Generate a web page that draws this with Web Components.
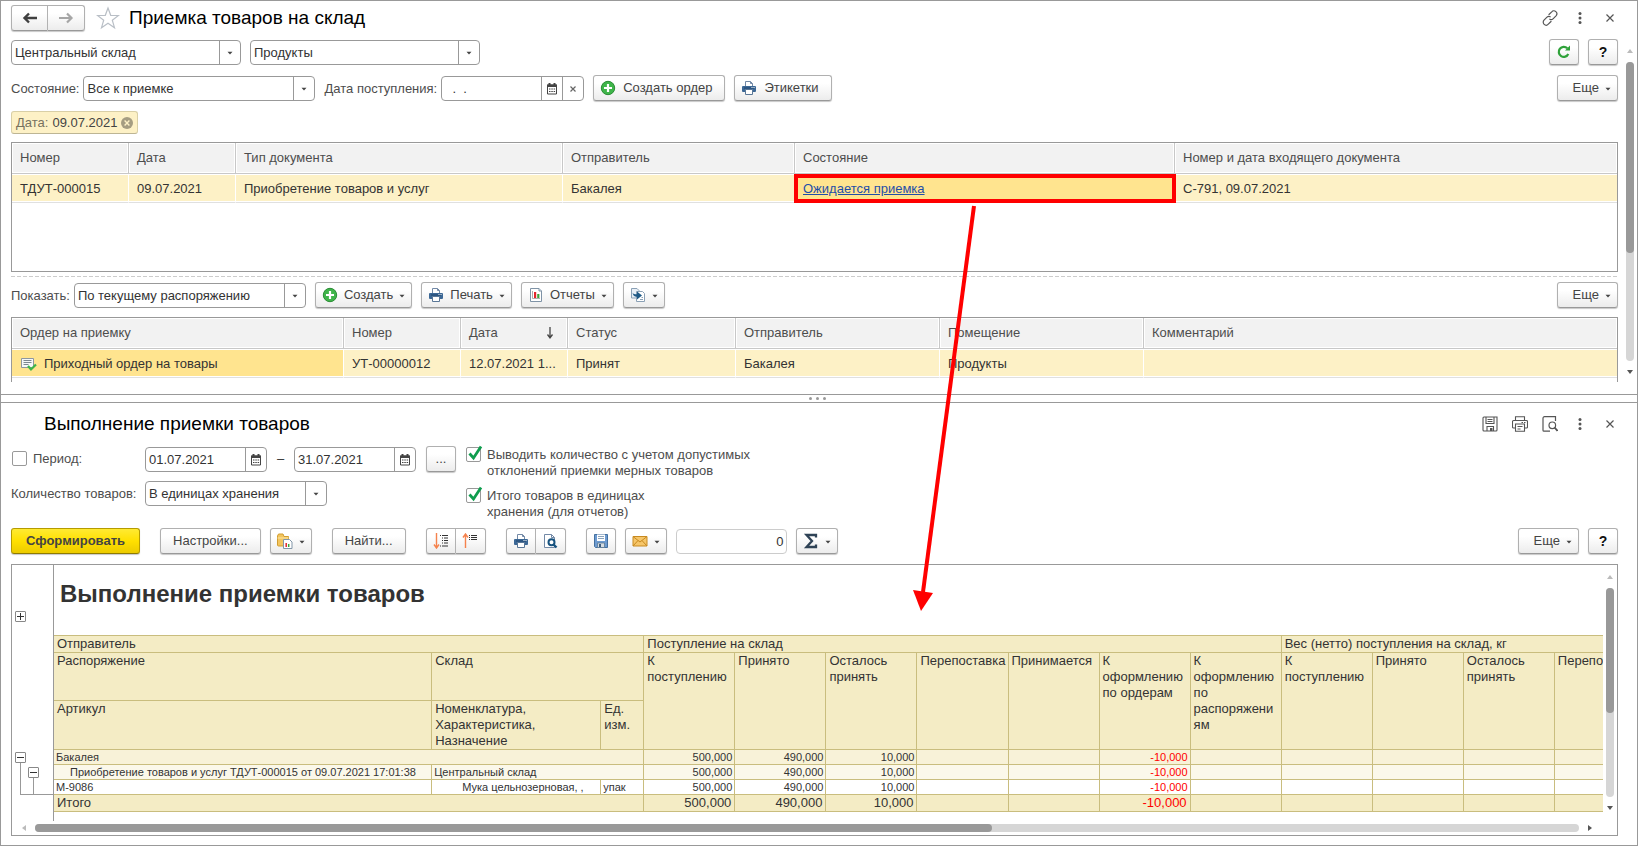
<!DOCTYPE html>
<html lang="ru">
<head>
<meta charset="utf-8">
<title>Приемка товаров на склад</title>
<style>
  body { margin: 0; background: #fff; color: #333; font: 13px/16px "Liberation Sans", Arial, sans-serif; }
</style>
</head>
<body>
<wh-app></wh-app>

<script>
const ICONS = {
  back: ['0 0 16 16', '<path d="M15 8H3M7 3.5 2.5 8 7 12.5" fill="none" stroke="#404040" stroke-width="2.4"/>'],
  forward: ['0 0 16 16', '<path d="M1 8h12M9 3.5 13.5 8 9 12.500" fill="none" stroke="#a6a6a6" stroke-width="2.2"/>'],
  star: ['0 0 24 24', '<path d="M12 2l2.700 7.300 7.800.2-6.200 4.700 2.200 7.500L12 17.300l-6.500 4.400 2.200-7.500L1.500 9.500l7.800-.2z" fill="#fff" stroke="#b9bfc6" stroke-width="1.200"/>'],
  link: ['0 0 16 16', '<g fill="none" stroke="#555" stroke-width="1.200" stroke-linecap="round"><path d="M7 4.500 9.700 1.800a2.800 2.800 0 0 1 4.300 4L11 8.800a2.700 2.700 0 0 1-3.200.4"/><path d="M9 11.500 6.300 14.200a2.800 2.800 0 0 1-4.300-4L5 7.200a2.700 2.700 0 0 1 3.200-.4"/></g>'],
  dots: ['0 0 16 16', '<g fill="#555"><circle cx="8" cy="3.500" r="1.500"/><circle cx="8" cy="8" r="1.500"/><circle cx="8" cy="12.500" r="1.500"/></g>'],
  close: ['0 0 16 16', '<path d="M4.500 4.500l7 7m0-7-7 7" stroke="#555" stroke-width="1.200"/>'],
  clear: ['0 0 16 16', '<path d="M5.500 5.500l5 5m0-5-5 5" stroke="#666" stroke-width="1.200"/>'],
  down: ['0 0 6 4', '<path d="M.5 .8h5L3 3.500z" fill="#444"/>'],
  calendar: ['0 0 16 16', '<path d="M3.500 4h9v9h-9z" fill="#fff" stroke="#444"/><path d="M3 3.500h10V6H3zM4.500 2h2v2h-2zM9.500 2h2v2h-2z" fill="#444"/><path d="M5 8h1.500M7.300 8h1.500M9.600 8h1.500M5 10.500h1.500M7.300 10.500h1.500M9.600 10.500h1.500" stroke="#444" stroke-width="1.200"/>'],
  plus: ['0 0 16 16', '<circle cx="8" cy="8" r="6.700" fill="#3fb54a" stroke="#2b8c35"/><path d="M8 4v8M4 8h8" stroke="#fff" stroke-width="2.200"/>'],
  printer: ['0 0 16 16', '<path d="M4.500 6V1.500h5l2 2V6" fill="#fff" stroke="#7289a6"/><path d="M9.500 1.500v2h2" fill="none" stroke="#7289a6"/><rect x="1" y="6" width="14" height="6" rx="1" fill="#3c6896"/><path d="M3 8h10" stroke="#1f456e"/><path d="M10.500 7.500h1M12.500 7.500h1" stroke="#fff"/><path d="M4.500 9.500h7v5h-7z" fill="#fff" stroke="#5a7797"/>'],
  report: ['0 0 16 16', '<path d="M2.500 1.500h8.500l2.500 2.500v10.500h-11z" fill="#fff" stroke="#7f93a6"/><path d="M11 1.500V4h2.500" fill="#dde5ec" stroke="#7f93a6"/><path d="M4.500 4v7.500h7.500" fill="none" stroke="#999" stroke-width=".8"/><path d="M6 5h2.200v6H6z" fill="#e3262c"/><path d="M9.200 7h2.200v4H9.200z" fill="#3aa53c"/>'],
  based: ['0 0 16 16', '<path d="M1.500 1.500h5.500l2 2v7.500H1.500z" fill="#e9f0f7" stroke="#8aa0b5"/><path d="M6.500 4.500h6l2 2v8h-8z" fill="#fff" stroke="#8aa0b5"/><path d="M2.500 4.500c0 2.500 1.500 2.700 4.500 2.700V4.500L12 8.500l-5 4V9.800C4 9.800 2.500 8 2.500 4.500z" fill="#1f5a86"/><path d="M10 12.500h3M11.500 10.500h1.500" stroke="#8aa0b5"/>'],
  refresh: ['0 0 16 16', '<path d="M12.300 10A5 5 0 1 1 11.300 4.300" fill="none" stroke="#2fa23a" stroke-width="2.200"/><path d="M9 6.500h5V1.500z" fill="#2fa23a"/>'],
  saveLine: ['0 0 16 16', '<g fill="none" stroke="#555" stroke-width="1.100"><path d="M1 2v12a1 1 0 0 0 1 1h12a1 1 0 0 0 1-1V1H2a1 1 0 0 0-1 1z"/><path d="M4 1v6.500h8V1M5.500 3.500h5M5.500 5.500h5M5 15v-4.500h6.500V15"/></g><path d="M8 12h2.500v3H8z" fill="#555"/>'],
  printLine: ['0 0 16 16', '<g fill="none" stroke="#555" stroke-width="1.100"><path d="M3.500 4V.8h9V4M3.500 12H1.500a1 1 0 0 1-1-1V5.500a1 1 0 0 1 1-1h13a1 1 0 0 1 1 1V11a1 1 0 0 1-1 1h-2"/><path d="M3.500 8h9v7.200h-9zM5.500 10.500h5M5.500 13h3M9.500 6.500h1.500M12 6.500h1.500"/></g>'],
  viewLine: ['0 0 16 16', '<g fill="none" stroke="#555" stroke-width="1.200"><path d="M13.500 5V.7h-11a1.500 1.500 0 0 0-1.500 1.500v12a1 1 0 0 0 1 1h6"/><circle cx="10.300" cy="9.300" r="3.300"/><path d="M12.500 11.500l3 3.300" stroke-width="1.800"/></g>'],
  order: ['0 0 18 16', '<path d="M1.500 2.500h12v9h-12z" fill="#f5f7f8" stroke="#8d979f"/><path d="M3.500 4.500h8M3.500 6.500h8M3.500 8.500h5" stroke="#7c8790"/><path d="M8 10l3 3.500 5-5" fill="none" stroke="#3db54a" stroke-width="2.200"/>'],
  sort: ['0 0 8 14', '<path d="M4 1v10M1.500 8.500 4 12l2.500-3.500" fill="none" stroke="#444" stroke-width="1.300"/>'],
  folder: ['0 0 16 16', '<path d="M.5 3V12a1 1 0 0 0 1 1h10V3.500H7L6 1H1.500z" fill="#f3c55e" stroke="#d19d31"/><path d="M.5 5h11" stroke="#fbe5a6"/><path d="M6.500 6.500h6l2.500 2.500v6.500h-8.500z" fill="#fff" stroke="#8296a8"/><path d="M9.200 10v4" stroke="#e3262c" stroke-width="1.500"/><path d="M11.700 11v3" stroke="#3aa53c" stroke-width="1.500"/>'],
  expand: ['0 0 16 16', '<path d="M3.500 0v14M1 11.500 3.500 15 6 11.500" fill="none" stroke="#f5824c" stroke-width="1.400"/><path d="M7 2.500h1M9 2.500h6M9 5h1M11 5h4M9 7.500h1M11 7.500h4M9 10h1M11 10h4M7 13h1M9 13h6" stroke="#333" stroke-width="1.100"/>'],
  collapse: ['0 0 16 16', '<path d="M3.500 15V1.500M1 4.500 3.500 1 6 4.500" fill="none" stroke="#f5824c" stroke-width="1.400"/><path d="M7 2.500h1M9 2.500h6M7 4.500h1M9 4.500h6M7 6.500h1M9 6.500h6" stroke="#333" stroke-width="1.100"/>'],
  preview: ['0 0 16 16', '<path d="M2.500 1.500h7l3 3v10h-10z" fill="#fff" stroke="#7289a6"/><path d="M9.500 1.500v3h3" fill="none" stroke="#7289a6"/><circle cx="9.500" cy="9.200" r="3" fill="#fff" stroke="#17537f" stroke-width="2"/><path d="M11.500 11.500l3 3" stroke="#17537f" stroke-width="2.400"/>'],
  save: ['0 0 16 16', '<path d="M1.500 1.500h13v13h-12l-1-1z" fill="#6d9bd1" stroke="#44709f"/><path d="M4 1.500h8V8H4z" fill="#fff"/><path d="M5 3.500h6M5 5.500h6" stroke="#8aa3bb"/><path d="M4.500 10h7v4.500h-7z" fill="#d5dce2" stroke="#5c7893" stroke-width=".8"/><path d="M6 11h2v3H6z" fill="#3d5e80"/>'],
  mail: ['0 0 16 16', '<path d="M1 3.500h14v9.500H1z" fill="#f6c66a" stroke="#c88a20"/><path d="M1 3.500l7 5.500 7-5.500M1 13l5-5.500M15 13l-5-5.500" fill="none" stroke="#c88a20"/>'],
  sigma: ['0 0 16 16', '<path d="M13 4.500V2H3.500L9 8l-5.500 6H13v-2.500" fill="none" stroke="#2f4356" stroke-width="2.300"/>'],
  tagClose: ['0 0 12 12', '<circle cx="6" cy="6" r="6" fill="#a59d82"/><path d="M3.600 3.600l4.800 4.800m0-4.800L3.600 8.400" stroke="#fdf1c6" stroke-width="1.400"/>'],
  check: ['0 0 18 18', '<path d="M3.500 8.500l4 4.500L15 1.500" fill="none" stroke="#0f9d4e" stroke-width="2.800"/>']
};

/* Base class: fills an open shadow root from render(). */
class WhElement extends HTMLElement {
  connectedCallback() {
    if (this.shadowRoot) return;
    this.attachShadow({ mode: 'open' }).innerHTML =
      `<style>*{box-sizing:border-box}:host([hidden]){display:none}</style>${this.render()}`;
  }
  attr(name, fallback = '') { return this.getAttribute(name) ?? fallback; }
}

class WhIcon extends WhElement {
  render() {
    const [box, body] = ICONS[this.attr('name')];
    const [, , w, h] = box.split(' ');
    return `<style>:host{display:block;flex:none;width:${w}px;height:${h}px}svg{display:block;width:100%;height:100%}</style>
      <svg viewBox="${box}" aria-hidden="true">${body}</svg>`;
  }
}
customElements.define('wh-icon', WhIcon);

class WhButton extends WhElement {
  render() {
    const icon = this.attr('icon');
    return `<style>
      :host{display:block;flex:none}
      button{display:flex;align-items:center;gap:7px;width:100%;height:26px;padding:0 12px;margin:0;
        border:1px solid #b0b0b0;border-bottom-color:#999;border-radius:3px;
        background:linear-gradient(#fff 30%,#ececec);box-shadow:0 1px 1px #c8c8c8;
        font:inherit;color:#444;white-space:nowrap;justify-content:center}
      :host([icon]) button{padding-left:6px}
      :host([menu]) button{padding-right:6px;gap:6px}
      :host([menu]:not([icon])) button{padding-left:15px}
      :host([icon-only]) button{padding:0 6px}
      :host([main]) button{padding:0 14px;border-color:#b59b00;border-bottom-color:#8f7b00;background:linear-gradient(#ffea33,#ffe000 50%,#eccb00);
        font-weight:bold;color:#444}
      :host([help]) button{font-size:14px;color:#111;font-weight:bold;padding:0}
      :host([join=left]) button{border-radius:3px 0 0 3px}
      :host([join=right]) button{border-radius:0 3px 3px 0;border-left:0}
      wh-icon[name=down]{margin-top:2px}
    </style>
    <button type="button" aria-label="${this.attr('hint', this.textContent)}">
      ${icon ? `<wh-icon name="${icon}"></wh-icon>` : ''}
      ${this.hasAttribute('icon-only') ? '' : '<span><slot></slot></span>'}
      ${this.hasAttribute('menu') ? '<wh-icon name="down"></wh-icon>' : ''}
    </button>`;
  }
}
customElements.define('wh-button', WhButton);

class WhTool extends WhElement {
  render() {
    return `<style>:host{display:block;flex:none}
      button{display:grid;place-items:center;width:16px;height:26px;padding:0;border:0;background:none}</style>
      <button type="button" aria-label="${this.attr('hint')}"><wh-icon name="${this.attr('icon')}"></wh-icon></button>`;
  }
}
customElements.define('wh-tool', WhTool);

const FIELD_CSS = `
  :host{display:flex;align-items:center;flex:none;height:25px}
  label{width:var(--label-width,auto);margin-right:var(--label-gap,4px);color:#4d4d4d;white-space:nowrap}
  .box{display:flex;width:var(--field-width);height:25px;border:1px solid #999;border-radius:4px;background:#fff;overflow:hidden}
  select,input{flex:1;min-width:0;height:23px;margin:0;padding:0 3px;border:0;background:none;font:inherit;color:#333;
    appearance:none;outline:0}
  .part{display:grid;place-items:center;width:21px;height:23px;padding:0;border:0;border-left:1px solid #999;background:none}`;

class WhSelect extends WhElement {
  render() {
    const label = this.attr('label');
    return `<style>${FIELD_CSS}
      .box{display:grid;grid-template-columns:1fr 21px}
      select{grid-area:1/1/2/3;width:100%} .part{grid-area:1/2;pointer-events:none}</style>
      ${label ? `<label for="f">${label}</label>` : ''}
      <div class="box"><select id="f" aria-label="${label || this.attr('hint')}"><option>${this.attr('value')}</option></select>
      <span class="part"><wh-icon name="down"></wh-icon></span></div>`;
  }
}
customElements.define('wh-select', WhSelect);

class WhDate extends WhElement {
  render() {
    const label = this.attr('label');
    return `<style>${FIELD_CSS}</style>
      ${label ? `<label for="f">${label}</label>` : ''}
      <div class="box"><input id="f" type="text" aria-label="${label || this.attr('hint')}" value="${this.attr('value')}">
      <button class="part" type="button" aria-label="Выбрать дату"><wh-icon name="calendar"></wh-icon></button>
      ${this.hasAttribute('clearable') ? '<button class="part" type="button" aria-label="Очистить"><wh-icon name="clear"></wh-icon></button>' : ''}
      </div>`;
  }
}
customElements.define('wh-date', WhDate);

class WhNumber extends WhElement {
  render() {
    return `<style>${FIELD_CSS} .box{border-color:#ccc} input{text-align:right;padding:0 2px}</style>
      <div class="box"><input type="text" inputmode="numeric" aria-label="${this.attr('hint')}" value="${this.attr('value')}"></div>`;
  }
}
customElements.define('wh-number', WhNumber);

class WhCheck extends WhElement {
  render() {
    return `<style>
      :host{display:block}
      label{display:flex;gap:6px;color:#4d4d4d}
      .mark{display:grid;flex:none;width:15px;height:16px}
      input{grid-area:1/1;appearance:none;width:15px;height:15px;margin:0;border:1px solid #999;border-radius:2px;background:#fff}
      wh-icon{grid-area:1/1;margin-top:-2px;display:none;pointer-events:none}
      input:checked + wh-icon{display:block}
    </style>
    <label><span class="mark"><input type="checkbox" ${this.hasAttribute('checked') ? 'checked' : ''}><wh-icon name="check"></wh-icon></span>
    <span><slot></slot></span></label>`;
  }
}
customElements.define('wh-check', WhCheck);

/* Scroll bar: arrows at both ends, thumb length in per cent of the track. */
class WhScroll extends WhElement {
  render() {
    const v = !this.hasAttribute('horizontal');
    const arrows = v ? ['M0 5h6L3 1z', 'M0 1h6L3 5z'] : ['M5 0v6L1 3z', 'M1 0v6l4-3z'];
    const arrow = (d, c) => `<svg viewBox="0 0 6 6" aria-hidden="true"><path d="${d}" fill="${c}"/></svg>`;
    return `<style>
      :host{display:flex;flex-direction:${v ? 'column' : 'row'};align-items:center;gap:8px;${v ? 'width' : 'height'}:8px}
      svg{width:6px;height:6px;flex:none}
      .track{flex:1;${v ? 'width' : 'height'}:8px;border-radius:4px;background:#d6d6d6}
      .thumb{${v ? 'height' : 'width'}:${this.attr('thumb')}%;${v ? 'width' : 'height'}:8px;border-radius:4px;background:#999}
    </style>${arrow(arrows[0], '#bbb')}<div class="track"><div class="thumb"></div></div>${arrow(arrows[1], '#555')}`;
  }
}
customElements.define('wh-scroll', WhScroll);

class WhTag extends WhElement {
  render() {
    return `<style>
      :host{display:flex;align-items:center;gap:4px;align-self:flex-start;height:23px;padding:0 4px;border:1px solid #d9cfa6;
        border-bottom-color:#bdb594;border-radius:3px;background:#fdf1c6;color:#444;box-sizing:border-box}
      .name{color:#77725f}
      button{padding:0;border:0;background:none}
    </style><span class="name">${this.attr('name')}</span><span><slot></slot></span>
    <button type="button" aria-label="Убрать отбор"><wh-icon name="tagClose"></wh-icon></button>`;
  }
}
customElements.define('wh-tag', WhTag);

class WhTitlebar extends WhElement {
  render() {
    return `<style>
      :host{display:flex;align-items:center;height:26px}
      h1{flex:1;margin:0;font-size:19px;line-height:24px;font-weight:normal;color:#000}
      ::slotted(*){flex:none}
      .tools{display:flex;gap:14px}
    </style><slot name="nav"></slot><h1><slot></slot></h1><div class="tools"><slot name="tools"></slot></div>`;
  }
}
customElements.define('wh-titlebar', WhTitlebar);

const LIST_CSS = `
  :host{display:block;border:1px solid #999}
  table{width:100%;table-layout:fixed;border-collapse:separate;border-spacing:0}
  th,td{padding:0 8px;text-align:left;white-space:nowrap;font-weight:normal;border-right:1px solid #fff}
  th{height:31px;color:#4d4d4d;background:#f2f2f2;border-right-color:#c8c8c8;border-bottom:1px solid #c8c8c8;box-shadow:inset 0 0 0 1px #fff}
  td{height:29px;padding-top:2px;background:#fdf1c6;border-bottom:1px solid #e0e0e0;box-shadow:inset 0 1px #fff,inset 0 -1px #fff}
  th:last-child,td:last-child{border-right:0}
  td.active{background:#ffe48f}
  .line{display:flex;align-items:center;justify-content:space-between;padding-right:5px}
  .pic{display:flex;align-items:center;gap:6px}`;

class WhDocs extends WhElement {
  render() {
    return `<style>${LIST_CSS}
      :host{padding-bottom:68px}
      a{color:#1f4fa8}
      td.mark{position:relative;background:#ffe48f}
      td.mark::after{content:"";position:absolute;inset:0 -2px -1px -1px;border:4px solid #f00;pointer-events:none}
    </style>
    <table>
      <colgroup><col style="width:117px"><col style="width:107px"><col style="width:327px"><col style="width:232px"><col style="width:380px"><col></colgroup>
      <thead><tr><th>Номер</th><th>Дата</th><th>Тип документа</th><th>Отправитель</th><th>Состояние</th><th>Номер и дата входящего документа</th></tr></thead>
      <tbody><tr><td>ТДУТ-000015</td><td>09.07.2021</td><td>Приобретение товаров и услуг</td><td>Бакалея</td>
        <td class="mark"><a href="#">Ожидается приемка</a></td><td>С-791, 09.07.2021</td></tr></tbody>
    </table>`;
  }
}
customElements.define('wh-docs', WhDocs);

class WhOrders extends WhElement {
  render() {
    return `<style>${LIST_CSS}
      :host{border-bottom:0;padding-bottom:4px}
    </style>
    <table>
      <colgroup><col style="width:332px"><col style="width:117px"><col style="width:107px"><col style="width:168px"><col style="width:204px"><col style="width:204px"><col></colgroup>
      <thead><tr><th>Ордер на приемку</th><th>Номер</th><th><div class="line">Дата <wh-icon name="sort"></wh-icon></div></th><th>Статус</th><th>Отправитель</th><th>Помещение</th><th>Комментарий</th></tr></thead>
      <tbody><tr><td class="active"><div class="pic"><wh-icon name="order"></wh-icon>Приходный ордер на товары</div></td><td>УТ-00000012</td><td>12.07.2021 1...</td>
        <td>Принят</td><td>Бакалея</td><td>Продукты</td><td></td></tr></tbody>
    </table>`;
  }
}
customElements.define('wh-orders', WhOrders);

class WhReport extends WhElement {
  render() {
    const blank = n => '<td></td>'.repeat(n);
    const nums = `<td class="n">500,000</td><td class="n">490,000</td><td class="n">10,000</td>${blank(2)}<td class="n neg">-10,000</td>${blank(5)}`;
    return `<style>
      :host{display:grid;grid-template:1fr auto / 1fr auto;border:1px solid #999;min-height:0}
      .view{display:grid;grid-template-columns:42px 1fr;overflow:hidden;min-height:0}
      .tree{border-right:1px solid #999;padding:46px 0 0 3px}
      .tree button{display:block;width:11px;height:11px;padding:0;border:1px solid #888;border-radius:1px;
        background:linear-gradient(#333,#333) center/7px 1px no-repeat,#fff}
      .tree button.closed{background:linear-gradient(#333,#333) center/7px 1px no-repeat,linear-gradient(#333,#333) center/1px 7px no-repeat,#fff}
      .tree .closed + button{margin-top:130px}
      .branch{margin-left:5px;height:32px;border-left:1px solid #999;border-bottom:1px solid #999;padding:4px 0 0 7px}
      .branch .branch{height:16px;border-bottom:0}
      .sheet{overflow:hidden}
      h2{margin:0;padding:15px 0 27px 6px;font-size:24px;line-height:28px;color:#333}
      table{width:1683px;table-layout:fixed;border-collapse:separate;border-spacing:0;border-top:1px solid #c9bd7e}
      th,td{padding:0 2px 0 3px;border:solid #c9bd7e;border-width:0 1px 1px 0;text-align:left;vertical-align:top;font-weight:normal;
        overflow-wrap:anywhere}
      th,.total td{background:#f4ecc5}
      tr.r1 th,.total td{height:17px}
      tr.r2 th{height:48px}
      tr.r3 th{height:49px}
      .sum td{height:15px;font-size:11px;line-height:14px;padding-left:2px}
      .g1 td{background:#f8f2d8}
      .g2 td{background:#fbf8ea}
      td.n{text-align:right}
      .total td.n{padding-right:3px}
      td.neg{color:#f00}
      td.in1{padding-left:16px!important}
      td.in2{padding-left:30px!important}
      .vs{margin:9px 3px 10px}
      .hs{margin:3px 24px 3px 9px;grid-column:1/3}
    </style>
    <div class="view">
      <div class="tree">
        <button class="closed" type="button" aria-label="Развернуть"></button>
        <button type="button" aria-label="Свернуть"></button>
        <div class="branch"><button type="button" aria-label="Свернуть"></button><div class="branch"></div></div>
      </div>
      <div class="sheet">
        <h2>Выполнение приемки товаров</h2>
        <table>
          <colgroup><col style="width:378px"><col style="width:169px"><col style="width:43px">${'<col style="width:91px">'.repeat(12)}</colgroup>
          <tr class="r1"><th colspan="3">Отправитель</th><th colspan="7">Поступление на склад</th><th colspan="5">Вес (нетто) поступления на склад, кг</th></tr>
          <tr class="r2"><th>Распоряжение</th><th colspan="2">Склад</th>
            <th rowspan="2">К поступлению</th><th rowspan="2">Принято</th><th rowspan="2">Осталось принять</th><th rowspan="2">Перепоставка</th><th rowspan="2">Принимается</th>
            <th rowspan="2">К оформлению по ордерам</th><th rowspan="2">К оформлению по распоряжениям</th>
            <th rowspan="2">К поступлению</th><th rowspan="2">Принято</th><th rowspan="2">Осталось принять</th><th rowspan="2">Перепоставка</th><th rowspan="2"></th></tr>
          <tr class="r3"><th>Артикул</th><th>Номенклатура,<br>Характеристика,<br>Назначение</th><th>Ед. изм.</th></tr>
          <tr class="sum g1"><td colspan="3">Бакалея</td>${nums}</tr>
          <tr class="sum g2"><td class="in1">Приобретение товаров и услуг ТДУТ-000015 от 09.07.2021 17:01:38</td><td colspan="2">Центральный склад</td>${nums}</tr>
          <tr class="sum"><td>М-9086</td><td class="in2">Мука цельнозерновая, ,</td><td>упак</td>${nums}</tr>
          <tr class="total"><td colspan="3">Итого</td>${nums}</tr>
        </table>
      </div>
    </div>
    <wh-scroll class="vs" thumb="60"></wh-scroll>
    <wh-scroll class="hs" horizontal thumb="62"></wh-scroll>`;
  }
}
customElements.define('wh-report', WhReport);

/* Upper pane: documents awaiting receipt and their orders. */
class WhReceiving extends WhElement {
  render() {
    return `<style>
      :host{display:block;padding:4px 3px 12px 10px;border-bottom:1px solid #999}
      .row{display:flex;align-items:flex-end;gap:9px}
      .nav{display:flex;align-items:center;margin-right:9px;gap:11px}
      .pair{display:flex} .pair wh-button{width:37px}
      .body{display:flex;gap:8px;margin-top:8px}
      main{flex:1;min-width:0;display:flex;flex-direction:column}
      wh-titlebar{margin-right:16px}
      .body wh-scroll{margin:9px 0 7px}
      .end{margin-left:auto}
      .sq{width:30px}
      .filters,wh-tag{margin-top:10px}
      wh-docs{margin-top:8px}
      .dash{height:1px;margin:4px 0 5px;background:repeating-linear-gradient(90deg,#ccc 0 4px,#fff 4px 6px)}
      wh-orders{margin-top:9px}
      .store{--field-width:230px} .state{--field-width:232px}
      .when{--field-width:143px}
    </style>
    <wh-titlebar>
      <div slot="nav" class="nav"><div class="pair">
        <wh-button icon="back" icon-only join="left" hint="Назад"></wh-button><wh-button icon="forward" icon-only join="right" hint="Вперед"></wh-button>
      </div><wh-icon name="star"></wh-icon></div>
      Приемка товаров на склад
      <wh-tool slot="tools" icon="link" hint="Получить ссылку"></wh-tool>
      <wh-tool slot="tools" icon="dots" hint="Еще"></wh-tool>
      <wh-tool slot="tools" icon="close" hint="Закрыть"></wh-tool>
    </wh-titlebar>
    <div class="body">
      <main>
        <div class="row">
          <wh-select class="store" hint="Склад" value="Центральный склад"></wh-select>
          <wh-select class="store" hint="Помещение" value="Продукты"></wh-select>
          <wh-button class="end sq" icon="refresh" icon-only hint="Обновить"></wh-button>
          <wh-button class="sq" help>?</wh-button>
        </div>
        <div class="row filters">
          <wh-select class="state" label="Состояние:" value="Все к приемке"></wh-select>
          <wh-date class="when" label="Дата поступления:" value="  .  .    " clearable></wh-date>
          <wh-button icon="plus">Создать ордер</wh-button>
          <wh-button icon="printer">Этикетки</wh-button>
          <wh-button class="end" menu>Еще</wh-button>
        </div>
        <wh-tag name="Дата:">09.07.2021</wh-tag>
        <wh-docs></wh-docs>
        <div class="dash"></div>
        <div class="row">
          <wh-select class="state" label="Показать:" value="По текущему распоряжению"></wh-select>
          <wh-button icon="plus" menu>Создать</wh-button>
          <wh-button icon="printer" menu>Печать</wh-button>
          <wh-button icon="report" menu>Отчеты</wh-button>
          <wh-button icon="based" icon-only menu hint="Создать на основании"></wh-button>
          <wh-button class="end" menu>Еще</wh-button>
        </div>
        <wh-orders></wh-orders>
      </main>
      <wh-scroll thumb="64"></wh-scroll>
    </div>`;
  }
}
customElements.define('wh-receiving', WhReceiving);

/* Lower pane: the receipt report with its settings. */
class WhExecution extends WhElement {
  render() {
    return `<style>
      :host{display:flex;flex-direction:column;flex:1;min-height:0;padding:8px 19px 9px 10px;border-top:1px solid #999}
      wh-titlebar{padding-left:33px}
      .form{display:flex;gap:10px;margin-top:9px}
      .main{display:grid;gap:9px;align-content:start}
      .row{display:flex;align-items:flex-end}
      .period{width:133px;margin-left:1px;align-self:center}
      .day{--field-width:122px}
      .dash{width:27px;text-align:center;line-height:26px}
      .more{width:30px;margin-left:10px}
      .qty{--label-width:134px;--label-gap:0px;--field-width:182px}
      .flags{display:grid;gap:9px;align-content:start;margin-top:1px}
      .bar{display:flex;align-items:flex-end;margin-top:8px;gap:20px}
      .near{display:flex;align-items:flex-end;gap:9px}
      .pair{display:flex}
      .pair wh-button,.sq{width:30px}
      .end{margin-left:auto}
      .num{--field-width:111px}
      wh-report{flex:1;margin-top:10px}
    </style>
    <wh-titlebar>Выполнение приемки товаров
      <wh-tool slot="tools" icon="saveLine" hint="Сохранить"></wh-tool>
      <wh-tool slot="tools" icon="printLine" hint="Печать"></wh-tool>
      <wh-tool slot="tools" icon="viewLine" hint="Предварительный просмотр"></wh-tool>
      <wh-tool slot="tools" icon="dots" hint="Еще"></wh-tool>
      <wh-tool slot="tools" icon="close" hint="Закрыть"></wh-tool>
    </wh-titlebar>
    <div class="form">
      <div class="main">
        <div class="row">
          <wh-check class="period">Период:</wh-check>
          <wh-date class="day" hint="Начало периода" value="01.07.2021"></wh-date>
          <span class="dash">–</span>
          <wh-date class="day" hint="Конец периода" value="31.07.2021"></wh-date>
          <wh-button class="more">...</wh-button>
        </div>
        <div class="row"><wh-select class="qty" label="Количество товаров:" value="В единицах хранения"></wh-select></div>
      </div>
      <div class="flags">
        <wh-check checked>Выводить количество с учетом допустимых<br>отклонений приемки мерных товаров</wh-check>
        <wh-check checked>Итого товаров в единицах<br>хранения (для отчетов)</wh-check>
      </div>
    </div>
    <div class="bar">
      <wh-button main>Сформировать</wh-button>
      <div class="near"><wh-button>Настройки...</wh-button><wh-button icon="folder" icon-only menu hint="Варианты отчета"></wh-button></div>
      <wh-button>Найти...</wh-button>
      <div class="pair"><wh-button icon="expand" icon-only join="left" hint="Развернуть группы"></wh-button><wh-button icon="collapse" icon-only join="right" hint="Свернуть группы"></wh-button></div>
      <div class="pair"><wh-button icon="printer" icon-only join="left" hint="Печать"></wh-button><wh-button icon="preview" icon-only join="right" hint="Просмотр"></wh-button></div>
      <div class="near">
        <wh-button class="sq" icon="save" icon-only hint="Сохранить"></wh-button>
        <wh-button icon="mail" icon-only menu hint="Отправить"></wh-button>
        <wh-number class="num" hint="Сумма" value="0"></wh-number>
        <wh-button icon="sigma" icon-only menu hint="Показатель"></wh-button>
      </div>
      <div class="near end"><wh-button menu>Еще</wh-button><wh-button class="sq" help>?</wh-button></div>
    </div>
    <wh-report></wh-report>`;
  }
}
customElements.define('wh-execution', WhExecution);

class WhApp extends WhElement {
  render() {
    return `<style>
      :host{display:flex;flex-direction:column;position:relative;box-sizing:border-box;min-height:100vh;border:1px solid #999}
      .grip{display:flex;justify-content:center;align-items:center;gap:4px;height:7px;padding-right:4px}
      .grip i{width:3px;height:3px;border-radius:50%;background:#999}
      .pointer{position:absolute;left:905px;top:203px;width:80px;height:410px;pointer-events:none}
    </style>
    <wh-receiving></wh-receiving>
    <div class="grip"><i></i><i></i><i></i></div>
    <wh-execution></wh-execution>
    <svg class="pointer" viewBox="0 0 80 410" aria-hidden="true"><path d="M68 2 17 388" stroke="#f00" stroke-width="4"/><path d="M7 386l20 3-12 18z" fill="#f00"/></svg>`;
  }
}
customElements.define('wh-app', WhApp);
</script>
</body>
</html>
